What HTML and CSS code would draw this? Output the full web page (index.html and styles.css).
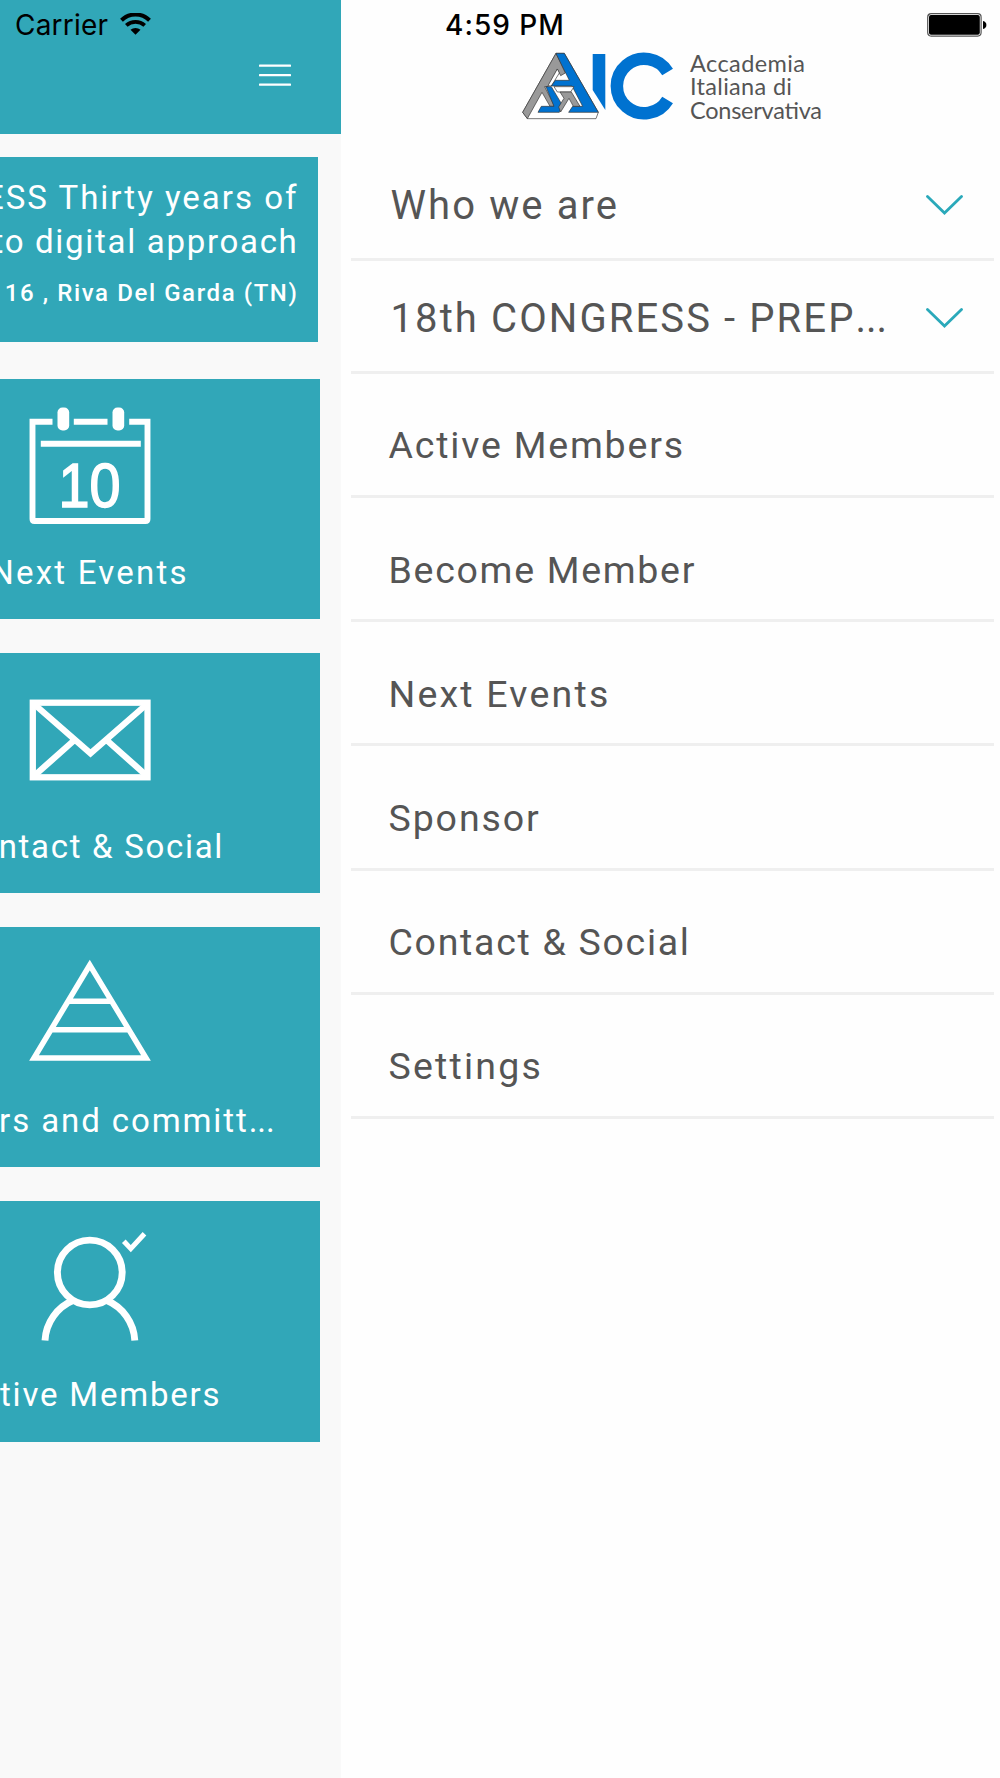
FILE: index.html
```
<!DOCTYPE html>
<html lang="en">
<head>
    <meta charset="UTF-8">
    <meta name="viewport" content="width=device-width, initial-scale=1.0">
    <title>Accademia Italiana di Conservativa</title>
    <link rel="stylesheet" href="styles.css">
</head>
<body>
    <div class="status-bar">
        <div class="carrier">
            <span>Carrier</span>
            <svg width="31" height="22" viewBox="0 0 31 22">
                <path d="M1.5 7.2 A20 20 0 0 1 29.5 7.2" fill="none" stroke="#000" stroke-width="4"/>
                <path d="M6.3 12.4 A13.5 13.5 0 0 1 24.7 12.4" fill="none" stroke="#000" stroke-width="3.8"/>
                <path d="M10.5 16.8 A7.5 7.5 0 0 1 20.5 16.8 L15.5 21.8 Z"/>
            </svg>
        </div>
        <span class="time">4:59 PM</span>
        <svg class="battery" width="60" height="24" viewBox="0 0 60 24">
            <rect x="0.7" y="0.7" width="53.4" height="22.4" rx="3.5" fill="#fff" stroke="#555" stroke-width="1.2"/>
            <rect x="2" y="2" width="50.8" height="19.8" rx="2"/>
            <path d="M56 8 C60.5 8.5 60.5 15.5 56 16 Z"/>
        </svg>
    </div>

    <div class="home">
        <header class="topbar">
            <svg width="32" height="22" viewBox="0 0 32 22">
                <path d="M1 1.6h30M1 11.1h30M1 20.6h30" stroke="#fff" stroke-width="2.4" stroke-linecap="round"/>
            </svg>
        </header>

        <div class="event">
            <div class="event-line event-title">18th CONGRESS Thirty years of</div>
            <div class="event-line event-sub">from analog to digital approach</div>
            <div class="event-line event-place">October 16 , Riva Del Garda (TN)</div>
        </div>

        <div class="tiles">
            <div class="tile">
                <svg class="icon" viewBox="0 0 122 150">
                    <path d="M23.5 22.7H3.5V120q0 2 2 2H116.5q2 0 2-2V22.7H100.2M44.8 22.7H78.5M11.8 44.8H111.8" fill="none" stroke="#fff" stroke-width="5.9"/>
                    <rect x="28.5" y="8.5" width="11.7" height="23" rx="5"/>
                    <rect x="83.5" y="8.5" width="11.7" height="23" rx="5"/>
                    <text x="29.5" y="107.8" class="day" textLength="62" lengthAdjust="spacingAndGlyphs">10</text>
                </svg>
                <span class="label label-events">Next Events</span>
            </div>
            <div class="tile">
                <svg class="icon" viewBox="0 0 122 150">
                    <g fill="none" stroke="#fff" stroke-width="6.3">
                        <rect x="3.8" y="29.7" width="114.7" height="74.6"/>
                        <path d="M5 31L61.5 80.3L118 31M5 103L45.5 67M118 103L77.5 67"/>
                    </g>
                </svg>
                <span class="label label-contact">Contact &amp; Social</span>
            </div>
            <div class="tile">
                <svg class="icon" viewBox="0 0 122 150">
                    <path d="M60.8 18L5 111H117ZM39 54.3H83M22 82.7H100" fill="none" stroke="#fff" stroke-width="5.5"/>
                </svg>
                <span class="label label-officers">Officers and committ<span class="dots">...</span></span>
            </div>
            <div class="tile">
                <svg class="icon" viewBox="0 0 122 150">
                    <g fill="none" stroke="#fff" stroke-width="6.9">
                        <circle cx="60.8" cy="51.5" r="32.4"/>
                        <path d="M16 119.5A46 46 0 0 1 44.5 79.3M105.8 119.5A46 46 0 0 0 77.3 79.3"/>
                        <path d="M94.8 20.2L101.8 27.6L115.5 12.8" stroke-width="5"/>
                    </g>
                </svg>
                <span class="label label-members">Active Members</span>
            </div>
        </div>
    </div>

    <nav class="drawer">
        <div class="logo">
            <svg width="306" height="80" viewBox="0 0 306 80">
                <!-- triangle emblem -->
                <g transform="scale(0.3333)" stroke="#333" stroke-width="2" stroke-linejoin="round">
                    <path d="M108 25H133L235 202L228 221H22L8 202Z" fill="#fff"/>
                    <path d="M108 25L8 202L22 221L66 142L90 184H104L74 125H84L112 72L122 92L136 84Z" fill="#999"/>
                    <path d="M112 72L84 122L94 123L118 84Z" fill="#fff"/>
                    <path d="M108 25H133L235 202H146L158 184H188L156 123H94L106 106H148Z" fill="#0072d0"/>
                    <path d="M78 125H94L128 182L118 202H54L64 184H102Z" fill="#0072d0"/>
                    <path d="M102 125H162L152 141H112Z" fill="#fff"/>
                    <path d="M120 141H154L180 184H160L147 160L122 201L116 186L132 160Z" fill="#999"/>
                </g>
                <path d="M72.7 9H85.3V65L72.7 45Z" fill="#0072d0"/>
                <path d="M147.6 27A27.3 27.3 0 1 0 147.6 55" fill="none" stroke="#0072d0" stroke-width="12.5"/>
                <g class="logo-text">
                    <text x="170" y="27" textLength="115">Accademia</text>
                    <text x="170" y="50" textLength="102">Italiana di</text>
                    <text x="170" y="73.5" textLength="132">Conservativa</text>
                </g>
            </svg>
        </div>
        <ul class="menu">
            <li class="group">
                <span class="t-who">Who we are</span>
                <svg class="chevron" viewBox="0 0 37 20"><path d="M1.5 1.5L18.5 18L35.5 1.5"/></svg>
            </li>
            <li class="group">
                <span class="t-congress">18th CONGRESS - PREP<span class="dots">...</span></span>
                <svg class="chevron" viewBox="0 0 37 20"><path d="M1.5 1.5L18.5 18L35.5 1.5"/></svg>
            </li>
            <li><span class="t-active">Active Members</span></li>
            <li><span class="t-become">Become Member</span></li>
            <li><span class="t-next">Next Events</span></li>
            <li><span class="t-sponsor">Sponsor</span></li>
            <li><span class="t-contact">Contact &amp; Social</span></li>
            <li><span class="t-settings">Settings</span></li>
        </ul>
    </nav>
</body>
</html>
```
FILE: styles.css
```
* {
    box-sizing: border-box;
}

body {
    margin: 0;
    width: 1000px;
    height: 1778px;
    display: flex;
    position: relative;
    overflow: hidden;
    background-color: #fefefe;
    font-family: Roboto, "Open Sans", sans-serif;
}

svg {
    display: block;
    flex-shrink: 0;
}

/* status bar lies over both panels */
.status-bar {
    position: absolute;
    top: 0;
    left: 0;
    width: 100%;
    height: 50px;
    padding: 0 13px 0 15px;
    display: grid;
    grid-template-columns: 1fr auto 1fr;
    align-items: center;
    font-family: Inter, sans-serif;
    font-size: 28px;
    line-height: 50px;
    color: #000;
}

.carrier {
    display: flex;
    align-items: center;
    gap: 11.5px;
    letter-spacing: 0.2px;
}

.carrier svg {
    margin-bottom: 3px;
}

.time {
    font-weight: 500;
    margin-left: 8px;
    letter-spacing: 1px;
}

.battery {
    justify-self: end;
}

/* left panel */
.home {
    width: 340.5px;
    height: 100%;
    overflow: hidden;
    flex-shrink: 0;
    background-color: #f9f9f9;
}

.topbar {
    height: 133.5px;
    padding: 63.5px 50px 0 0;
    display: flex;
    justify-content: flex-end;
    background-color: #31a7b8;
}

.event {
    width: 317.5px;
    height: 185.5px;
    margin-top: 23px;
    padding: 19px 19px 0 0;
    background-color: #31a7b8;
    color: #fff;
}

.event-line {
    display: flex;
    justify-content: flex-end;
    white-space: nowrap;
    font-size: 33px;
    line-height: 44px;
    letter-spacing: 2px;
}

.event-sub {
    letter-spacing: 1.7px;
}

.event-place {
    margin-top: 7px;
    font-size: 24px;
    font-weight: 500;
    letter-spacing: 1.6px;
}

.tiles {
    margin-top: 36.5px;
    display: flex;
    flex-direction: column;
    gap: 34px;
}

.tile {
    width: 461px;
    height: 240.3px;
    margin-left: -141px;
    padding-top: 20px;
    display: flex;
    flex-direction: column;
    align-items: center;
    background-color: #31a7b8;
    color: #fff;
}

.icon {
    width: 122px;
    height: 150px;
    fill: #fff;
}

.day {
    font-family: "Liberation Sans", sans-serif;
    font-size: 63px;
    stroke: #fff;
    stroke-width: 1.6;
}

.label {
    font-size: 33px;
    line-height: 48px;
    letter-spacing: 2px;
    white-space: nowrap;
}

.label-events {
    letter-spacing: 2.2px;
}

.label-contact {
    letter-spacing: 1.7px;
}

.label-officers {
    padding-right: 5px;
    letter-spacing: 1.9px;
}

.label-members {
    letter-spacing: 1.8px;
}

.dots {
    letter-spacing: 0;
}

/* drawer */
.drawer {
    width: 643px;
    margin-left: 10px;
}

.logo {
    height: 103.5px;
    margin-top: 45px;
    padding-left: 169.5px;
}

.logo-text {
    font-family: Lato, sans-serif;
    font-size: 23.5px;
    fill: #555;
}

.menu {
    margin: 0;
    padding: 0;
    list-style: none;
    color: #555;
}

.menu li {
    height: 124.2px;
    padding: 22px 0 0 38px;
    display: flex;
    align-items: center;
    border-bottom: 3px solid #efefef;
    font-size: 37.5px;
    letter-spacing: 2px;
    white-space: nowrap;
}

.menu .group {
    height: 112.7px;
    padding: 4px 31px 0 40px;
    justify-content: space-between;
    font-size: 40px;
}

.t-who {
    letter-spacing: 2.1px;
}

.t-congress {
    letter-spacing: 2.1px;
}

.t-active {
    letter-spacing: 1.8px;
}

.t-become,
.t-contact {
    letter-spacing: 1.7px;
}

.t-next,
.t-settings {
    letter-spacing: 2.2px;
}

.t-sponsor {
    letter-spacing: 1.9px;
}

.chevron {
    width: 37px;
    height: 20px;
    fill: none;
    stroke: #2aa9ba;
    stroke-width: 2.8;
    stroke-linecap: round;
}
```
